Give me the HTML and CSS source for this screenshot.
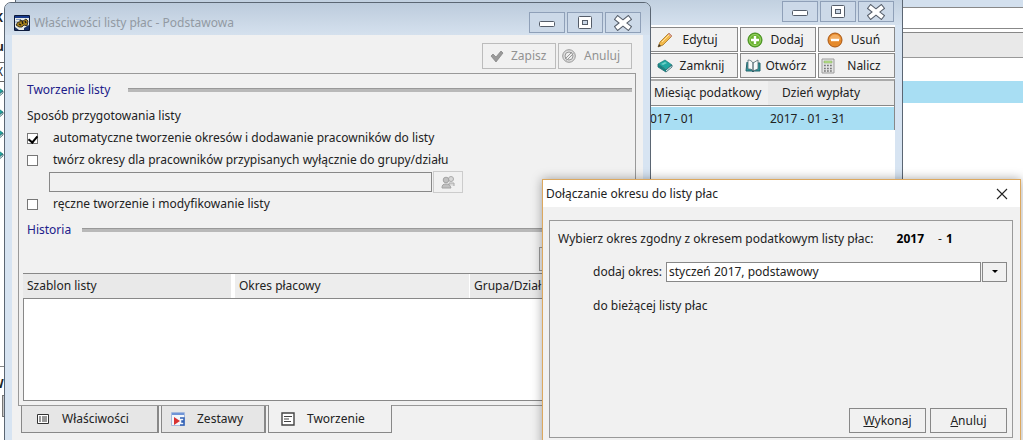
FILE: index.html
```html
<!DOCTYPE html>
<html lang="pl">
<head>
<meta charset="utf-8">
<title>Właściwości listy płac - Podstawowa</title>
<link rel="stylesheet" href="styles.css">
</head>
<body>
<svg class="defs" aria-hidden="true">
  <symbol id="i-min" viewBox="0 0 18 16"><rect x="1.500" y="6.500" width="15" height="5" rx="1" fill="#fff" stroke="#555d69"/></symbol>
  <symbol id="i-max" viewBox="0 0 18 16"><rect x="2.500" y="1.500" width="13" height="12" rx="1" fill="#fff" stroke="#555d69"/><rect x="6.500" y="5.500" width="5" height="4" fill="#c9d6e5" stroke="#555d69"/></symbol>
  <symbol id="i-close" viewBox="0 0 18 16"><path d="M4 4l10 8M14 4L4 12" stroke="#555d69" stroke-width="6" stroke-linecap="square"/><path d="M4 4l10 8M14 4L4 12" stroke="#fff" stroke-width="4" stroke-linecap="square"/></symbol>
  <symbol id="i-book" viewBox="0 0 16 16"><path d="M1 6l7-4 7 5-6 5z" fill="#20a6a0" stroke="#08706f" stroke-width=".6"/><path d="M1 6v3l8 5 6-5V7l-6 5z" fill="#e8f3f2" stroke="#245c66" stroke-width=".8"/><path d="M1 6v3l8 5v-2z" fill="#15807f"/><path d="M4 6l4-2 2 1-4 2z" fill="#6fd1c9"/></symbol>
</svg>
<main class="desktop">
  <section class="base" aria-label="Okno główne">
    <div class="base-rail">
      <b class="rail-k">K</b><b class="rail-u">u</b><span class="rail-x">X</span>
      <svg class="rail-book"><use href="#i-book"/></svg>
      <svg class="rail-book"><use href="#i-book"/></svg>
      <svg class="rail-book"><use href="#i-book"/></svg>
      <svg class="rail-book"><use href="#i-book"/></svg>
      <b class="rail-w">W</b><span class="rail-box"></span>
    </div>
    <div class="base-body">
      <div class="base-title"></div>
      <div class="base-field"></div>
      <div class="base-head"></div>
      <div class="base-row"></div>
    </div>
  </section>

  <section class="window list-window" aria-label="Listy płac">
    <header class="titlebar">
      <div class="controls">
        <button aria-label="Minimalizuj"><svg><use href="#i-min"/></svg></button>
        <button aria-label="Maksymalizuj"><svg><use href="#i-max"/></svg></button>
        <button aria-label="Zamknij okno"><svg><use href="#i-close"/></svg></button>
      </div>
    </header>
    <div class="list-client">
      <div class="toolbar">
        <button><svg viewBox="0 0 16 16"><path d="M1 15l2-5L12 1l3 3-9 9z" fill="#f2b94a" stroke="#a87322" stroke-width=".8"/><path d="M5 10l8-8" stroke="#ffe2a0"/><path d="M12 1l3 3-1 1-3-3z" fill="#d59aa5"/><path d="M1 15l1-3 2 2z" fill="#333"/></svg><span>Edytuj</span></button>
        <button><svg viewBox="0 0 16 16"><circle cx="8" cy="8" r="7" fill="#69b32e" stroke="#3f8a18"/><circle cx="8" cy="8" r="5.500" fill="none" stroke="#a7d978" stroke-width=".8"/><path d="M8 4v8M4 8h8" stroke="#fff" stroke-width="2.400"/></svg><span>Dodaj</span></button>
        <button><svg viewBox="0 0 16 16"><circle cx="8" cy="8" r="7" fill="#e58a2c" stroke="#a95612"/><path d="M2.500 8a5.500 5.500 0 0 1 11 0z" fill="#f3ad61"/><path d="M4 8h8" stroke="#fff" stroke-width="2.400"/></svg><span>Usuń</span></button>
        <button><svg><use href="#i-book"/></svg><span>Zamknij</span></button>
        <button><svg viewBox="0 0 16 16"><path d="M2 4L1 13h6l1 1 1-1h6V5h-2" fill="#2b9a9d" stroke="#24626b"/><path d="M3 2c2 0 4 1 5 3v8c-1-2-3-2-5-2zM8 5l5-3v9l-5 2z" fill="#f7fafa" stroke="#50666d" stroke-width=".8"/></svg><span>Otwórz</span></button>
        <button><svg viewBox="0 0 16 16"><path d="M2 1h12v14H2z" fill="#e4e4e4" stroke="#9c9c9c"/><path d="M4 3h8v2H4z" fill="#b9e28a" stroke="#7ea55a" stroke-width=".5"/><path d="M4 7.500h9M4 10.500h9M4 13h9" stroke="#777" stroke-width="1.500" stroke-dasharray="1.800 1.200"/></svg><span>Nalicz</span></button>
      </div>
      <table class="periods">
        <thead><tr><th>Miesiąc podatkowy</th><th>Dzień wypłaty</th></tr></thead>
        <tbody><tr><td>017 - 01</td><td>2017 - 01 - 31</td></tr></tbody>
      </table>
    </div>
  </section>

  <section class="window props-window" aria-label="Właściwości listy płac">
    <header class="titlebar">
      <svg class="app-icon" viewBox="0 0 16 16"><path d="M.5.500h15v15H.5z" fill="#e8ebe6" stroke="#0c1a3a"/><path d="M1 1h14v2H1z" fill="#193b8c"/><path d="M2 4.500h5M1 7h3" stroke="#8aa0c5"/><path d="M6 5l3 1 3-2 2 2-1 5-3-1-2 2H5l-3-2 2-3h2z" fill="#a5801c" stroke="#1c1c16" stroke-width=".8"/><path d="M8 6l1 3M11 6l1 2M5 9l2 1" stroke="#1c1c16" stroke-width="1.300"/><path d="M1 12l4 3H1zM10 13l5-3v5h-5z" fill="#1b3468"/></svg>
      <h1>Właściwości listy płac - Podstawowa</h1>
      <div class="controls">
        <button aria-label="Minimalizuj"><svg><use href="#i-min"/></svg></button>
        <button aria-label="Maksymalizuj"><svg><use href="#i-max"/></svg></button>
        <button aria-label="Zamknij okno"><svg><use href="#i-close"/></svg></button>
      </div>
    </header>
    <div class="props-client">
      <div class="actions">
        <button disabled><svg viewBox="0 0 14 14"><path d="M1 7l2-2 3 3 5-6 2 2-7 9z" fill="#9a9a9a" stroke="#808080" stroke-width=".7"/></svg><span>Zapisz</span></button>
        <button disabled><svg viewBox="0 0 14 14"><circle cx="7" cy="7" r="6.300" fill="#ddd" stroke="#999"/><circle cx="7" cy="7" r="4" fill="#eee" stroke="#999"/><path d="M3 10l7-7M4.500 11.500l7-7" stroke="#999"/></svg><span>Anuluj</span></button>
      </div>
      <div class="panel">
        <div class="rule"><h2>Tworzenie listy</h2></div>
        <p class="subhead">Sposób przygotowania listy</p>
        <label class="check"><input type="checkbox" checked>automatyczne tworzenie okresów i dodawanie pracowników do listy</label>
        <label class="check"><input type="checkbox">twórz okresy dla pracowników przypisanych wyłącznie do grupy/działu</label>
        <div class="group-pick">
          <input type="text" aria-label="Grupa lub dział" disabled>
          <button disabled aria-label="Wybierz grupę"><svg viewBox="0 0 14 14"><circle cx="10" cy="4" r="2.500" fill="#d8d8d8" stroke="#aaa"/><path d="M8 10V8h5v3" fill="#d8d8d8" stroke="#aaa"/><circle cx="5" cy="5" r="2.800" fill="#c0c0c0" stroke="#a4a4a4"/><path d="M1 13c0-3 1-4 4-4s4 1 5 4z" fill="#c0c0c0" stroke="#a4a4a4"/></svg></button>
        </div>
        <label class="check"><input type="checkbox">ręczne tworzenie i modyfikowanie listy</label>
        <div class="rule history"><h2>Historia</h2></div>
        <div class="history-actions"><button aria-label="Historia"></button></div>
        <table class="templates">
          <thead><tr><th>Szablon listy</th><th>Okres płacowy</th><th>Grupa/Dział</th></tr></thead>
        </table>
        <div class="templates-body"></div>
      </div>
      <nav class="tabs" role="tablist">
        <button role="tab" aria-selected="false"><svg viewBox="0 0 14 14"><path d="M1.500 2.500h11v9h-11z" fill="#fff" stroke="#333"/><path d="M3 5h2M3 7h2M3 9h2M6 5h5M6 7h5M6 9h5" stroke="#333"/></svg><span>Właściwości</span></button>
        <button role="tab" aria-selected="false"><svg viewBox="0 0 14 14"><path d="M.5.500h13v13H.5z" fill="#f3f6fb" stroke="#a5b9dd"/><path d="M1 1h12v2H1z" fill="#6f94d6"/><path d="M3 5l6 4-6 4z" fill="#d83232"/><path d="M9 6h4v3h-2v1h2v3H9" fill="none" stroke="#3261b5" stroke-width="1.500"/></svg><span>Zestawy</span></button>
        <button role="tab" aria-selected="true"><svg viewBox="0 0 14 14"><path d="M1 1h12v12H1z" fill="#fff" stroke="#444" stroke-width="1.400"/><path d="M3 4.500h8M3 7h5M3 9.500h7" stroke="#444"/></svg><span>Tworzenie</span></button>
      </nav>
    </div>
  </section>

  <section class="dialog" role="dialog" aria-labelledby="dialog-title">
    <header class="dialog-title">
      <h1 id="dialog-title">Dołączanie okresu do listy płac</h1>
      <button aria-label="Zamknij"><svg viewBox="0 0 12 12"><path d="M1 1l10 10M11 1L1 11" stroke="#222" stroke-width="1.100"/></svg></button>
    </header>
    <div class="dialog-client">
      <div class="dialog-panel">
        <p class="prompt">Wybierz okres zgodny z okresem podatkowym listy płac: <b>2017</b><span>- <b>1</b></span></p>
        <div class="field">
          <label for="period">dodaj okres:</label>
          <div class="combo">
            <select id="period"><option>styczeń 2017, podstawowy</option></select>
            <span class="arrow"><svg viewBox="0 0 8 4"><path d="M1 0h6L4 3z" fill="#000"/></svg></span>
          </div>
        </div>
        <p class="note">do bieżącej listy płac</p>
        <div class="dialog-actions"><button><u>W</u>ykonaj</button><button><u>A</u>nuluj</button></div>
      </div>
    </div>
  </section>
</main>
</body>
</html>
```
FILE: styles.css
```css
* { box-sizing: border-box; }
body {
  margin: 0;
  font: 12px/18px "Noto Sans", "Open Sans", sans-serif;
  color: #222;
}
h1, h2, p { margin: 0; font-size: inherit; font-weight: normal; }
button, input, select { font: inherit; color: inherit; margin: 0; border-radius: 0; }
button { padding: 0; display: flex; align-items: center; background: #f1f1f1; border: 1px solid #999; white-space: nowrap; }
table { border-collapse: separate; border-spacing: 0; width: 100%; table-layout: fixed; }
th, td { padding: 0; text-align: left; font-weight: normal; white-space: nowrap; overflow: hidden; }
svg { display: block; flex: none; }
.defs { position: absolute; width: 0; height: 0; }

.desktop { position: relative; height: 100vh; overflow: hidden; background: #fff; }

/* main window behind everything */
.base { display: flex; height: 100%; }
.base-rail { width: 15px; overflow: hidden; background: #fff; display: flex; flex-direction: column; padding-top: 9px; }
.rail-k { margin-left: -5px; }
.rail-u { margin: 11px 0 6px -4px; }
.rail-x { margin-left: -4px; border-top: 1px solid #666; border-bottom: 1px solid #666; }
.rail-book { width: 16px; height: 16px; margin: 2px 0 3px -12px; }
.rail-w { margin: 200px 0 2px -8px; border-top: 1px solid #888; padding-top: 8px; }
.rail-box { height: 22px; border: 1px solid #777; background: #c8c8c8; margin-left: 2px; }
.base-body { flex: 1; }
.base-title { height: 8px; background: #d3e0ee; border-bottom: 1px solid #888; }
.base-field { height: 21px; border-bottom: 1px solid #888; }
.base-head { height: 26px; margin: 3px 0 23px; background: #e9e9e9; border-top: 1px solid #888; border-bottom: 1px solid #999; }
.base-row { height: 22px; background: #a8def3; }

/* framed windows */
.window { position: absolute; border: 1px solid #5b6673; display: flex; flex-direction: column; background: #d7e4f2; padding: 0 7px; }
.titlebar { display: flex; align-items: center; }
.titlebar h1 { flex: 1; padding-left: 4px; color: #929aa3; }
.app-icon { width: 16px; height: 16px; }
.controls { display: flex; gap: 2px; margin-left: auto; }
.controls button { width: 36px; height: 21px; justify-content: center; background: #ccd9e8; border-color: #8fa0b8; }
.controls svg { width: 18px; height: 16px; }

.list-window { left: 15px; top: -3px; bottom: -8px; width: 888px; }
.list-window .titlebar { height: 27px; background: linear-gradient(#c0cfdf, #d5e1ee); margin: 0 -7px; padding-right: 8px; }
.list-client { flex: 1; background: #fff; padding: 2px 0 0 625px; }
.toolbar { display: grid; grid-template-columns: 90px 76px 1fr; gap: 1px 2px; padding-bottom: 1px; }
.toolbar button { height: 25px; border-color: #888; }
.toolbar svg { width: 16px; height: 16px; margin: 0 4px 0 8px; }
.toolbar span { flex: 1; text-align: center; }
.toolbar button:nth-child(3n + 1) span { padding-right: 14px; }
.toolbar button:nth-child(4) span { padding-right: 10px; }
.toolbar button:nth-child(3) span { padding-right: 10px; }
.toolbar button:nth-child(3n + 2) svg { margin: 0 2px 0 6px; }
.toolbar button:nth-child(3n + 2) span { padding-right: 6px; }
.toolbar button:nth-child(5) svg { margin: 0 2px 0 4px; }
.toolbar button:nth-child(6) svg { margin-left: 1px; }
.toolbar button:nth-child(6) span { padding-right: 6px; }
.periods { border-top: 2px solid #aaa; border-right: 1px solid #888; }
.periods th { height: 25px; background: #f0f0f0; padding-left: 6px; border-bottom: 1px solid #888; }
.periods th + th { background: #e9e9e9; padding-left: 14px; }
.periods th:first-child { width: 120px; }
.periods td { height: 24px; background: #a8def3; padding-left: 2px; border-top: 1px solid #fff; }

.props-window { left: 4px; top: 2px; bottom: -8px; width: 647px; border-radius: 7px 7px 0 0; overflow: hidden; }
.props-window .titlebar { height: 32px; margin: 0 -7px; padding: 7px 9px 0 9px; background: linear-gradient(#bccbdc, #d5e1ee); }
.props-client { flex: 1; display: flex; flex-direction: column; background: #f1f1f1; padding: 8px 7px 14px 6px; }
.actions { display: flex; justify-content: flex-end; gap: 2px; padding-right: 4px; }
.actions button { width: 74px; height: 26px; border-color: #bcbcbc; color: #929292; }
.actions svg { width: 14px; height: 14px; margin: 0 7px; }
.actions button + button svg { margin: 0 8px 0 3px; }

.panel { flex: 1; display: flex; flex-direction: column; margin-top: 4px; border: 1px solid #999; padding: 7px 3px 4px 4px; }
.rule { display: flex; align-items: center; gap: 18px; padding-left: 4px; color: #20208a; }
.rule::after { content: ""; flex: 1; height: 3px; background: #b9b9b9; border-top: 1px solid #999; }
.history { gap: 11px; margin-top: 6px; }
.subhead { padding: 8px 0 2px 4px; }
.check { display: flex; align-items: center; height: 22px; padding-left: 4px; }
.check input { appearance: none; width: 11px; height: 11px; margin: 0 15px 0 0; border: 1px solid #777; background: #fff; display: grid; justify-content: center; }
.check input:checked::after { content: ""; width: 4px; height: 7px; border: solid #000; border-width: 0 2px 2px 0; transform: rotate(40deg); }
.group-pick { display: flex; gap: 1px; padding-left: 26px; height: 22px; align-items: center; }
.group-pick input { width: 383px; height: 20px; background: #f1f1f1; border: 1px solid #888; }
.group-pick button { width: 30px; height: 22px; justify-content: center; border-color: #ccc; }
.group-pick svg { width: 14px; height: 14px; }
.history-actions { display: flex; justify-content: flex-end; padding: 8px 0 2px; }
.history-actions button { width: 93px; height: 24px; }
.templates { border-top: 1px solid #888; }
.templates th { height: 24px; background: #e9e9e9; padding-left: 4px; border-right: 4px solid #fff; }
.templates th:nth-child(1) { width: 212px; }
.templates th:nth-child(2) { width: 235px; background: #ededed; border-right-width: 1px; }
.templates th:last-child { border-right: 0; }
.templates-body { flex: 1; background: #fff; border: 1px solid #888; }
.tabs { display: flex; gap: 2px; padding-left: 3px; }
.tabs button { width: 138px; height: 27px; background: #e6e6e6; border-color: #888; border-top: 0; border-right-width: 2px; padding-left: 14px; }
.tabs button:nth-child(2) { width: 105px; padding-left: 9px; }
.tabs button:nth-child(3) { width: 124px; height: 28px; margin-top: -1px; padding-left: 12px; background: #f1f1f1; border-right-width: 1px; }
.tabs svg { width: 14px; height: 14px; margin-right: 12px; }

/* foreground dialog */
.dialog { position: absolute; left: 542px; top: 179px; right: 2px; bottom: -8px; background: #f1f1f1; border: 1px solid #dca85f; box-shadow: 0 0 10px rgba(0, 0, 0, .35); display: flex; flex-direction: column; }
.dialog-title { display: flex; justify-content: space-between; align-items: center; height: 27px; background: #fff; padding: 0 12px 0 3px; }
.dialog-title button { border: 0; background: none; }
.dialog-title svg { width: 12px; height: 12px; }
.dialog-client { flex: 1; display: flex; padding: 13px 7px 9px 6px; }
.dialog-panel { flex: 1; display: flex; flex-direction: column; border: 1px solid #999; padding: 9px 5px 4px 8px; }
.prompt { white-space: nowrap; }
.prompt b { color: #000; margin-left: 20px; }
.prompt span { margin-left: 14px; }
.prompt span b { margin-left: 1px; }
.field { display: flex; align-items: center; justify-content: space-between; margin: 14px 0 12px; padding-left: 35px; white-space: nowrap; }
.combo { flex: none; width: 341px; display: flex; gap: 1px; height: 20px; }
.combo select { appearance: none; flex: 1; background: #fff; border: 1px solid #888; padding: 0 2px; line-height: 18px; }
.arrow { width: 25px; border: 1px solid #888; display: flex; align-items: center; justify-content: center; }
.arrow svg { width: 8px; height: 4px; }
.note { padding: 3px 0 0 35px; }
.dialog-actions { display: flex; justify-content: flex-end; gap: 4px; margin-top: auto; }
.dialog-actions button { width: 77px; height: 25px; justify-content: center; border-color: #888; }
```
